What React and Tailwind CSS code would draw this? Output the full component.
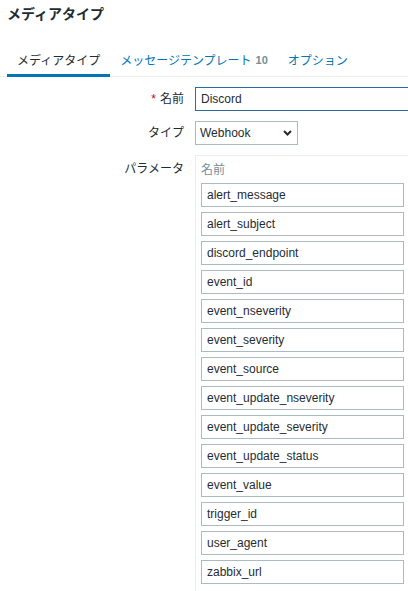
import React from "react";

const params = [
  "alert_message",
  "alert_subject",
  "discord_endpoint",
  "event_id",
  "event_nseverity",
  "event_severity",
  "event_source",
  "event_update_nseverity",
  "event_update_severity",
  "event_update_status",
  "event_value",
  "trigger_id",
  "user_agent",
  "zabbix_url",
];

export default function App() {
  return (
    <div
      className="w-[408px] h-[591px] overflow-hidden bg-white text-[#1f2c33] text-[12px]"
      style={{ fontFamily: '"Liberation Sans", "Noto Sans CJK JP", sans-serif' }}
    >
      <div className="h-[47px] pl-[7px] pt-[4px]">
        <h1 className="text-[14px] font-bold leading-[21px] text-[#1f2c33]">メディアタイプ</h1>
      </div>

      <nav className="flex pl-[7px] border-b border-[#ebeef0]">
        <div className="-mb-px h-[30px] px-[10px] flex items-center border-b-[3px] border-[#0275b8] text-[#1f2c33] leading-none">
          メディアタイプ
        </div>
        <div className="-mb-px h-[30px] px-[10px] flex items-center border-b-[3px] border-transparent text-[#0275b8] leading-none">
          メッセージテンプレート
          <span className="ml-[4px] text-[11px] font-bold text-[#768d99]">10</span>
        </div>
        <div className="-mb-px h-[30px] px-[10px] flex items-center border-b-[3px] border-transparent text-[#0275b8] leading-none">
          オプション
        </div>
      </nav>

      <div className="mt-[10px] flex flex-col gap-[10px]">
        <div className="flex items-center">
          <div className="w-[184px] shrink-0 text-right">
            <span className="text-[#d40000] mr-[4px]">*</span>名前
          </div>
          <div className="ml-[11px] w-[453px] h-[24px] border border-[#2d6ba3] px-[5px] flex items-center shrink-0">
            Discord
          </div>
        </div>

        <div className="flex items-center">
          <div className="w-[184px] shrink-0 text-right">タイプ</div>
          <div className="ml-[11px] w-[103px] h-[24px] border border-[#acbbc2] pl-[4px] pr-[5px] flex items-center justify-between shrink-0">
            <span>Webhook</span>
            <svg width="9" height="6" viewBox="0 0 9 6">
              <polyline points="1,1 4.5,4.5 8,1" fill="none" stroke="#1f2c33" strokeWidth="2" />
            </svg>
          </div>
        </div>

        <div className="flex items-start">
          <div className="w-[184px] shrink-0 text-right pt-[5px] leading-[18px]">パラメータ</div>
          <div className="ml-[11px] w-[240px] shrink-0 border border-[#ebeef0] pl-[5px] pt-[5px] pb-[10px]">
            <div className="text-[#768d99] leading-[18px] h-[22px]">名前</div>
            <div className="flex flex-col gap-[5px]">
              {params.map((p) => (
                <div
                  key={p}
                  className="w-[203px] h-[24px] border border-[#acbbc2] px-[5px] flex items-center"
                >
                  {p}
                </div>
              ))}
            </div>
          </div>
        </div>
      </div>
    </div>
  );
}
